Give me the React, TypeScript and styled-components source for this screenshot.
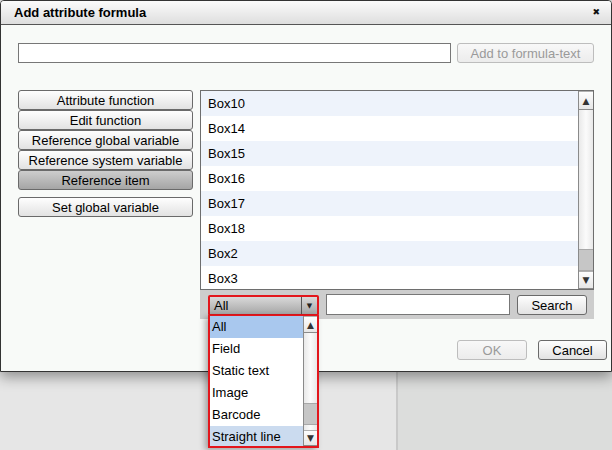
import React from "react";
import styled, { createGlobalStyle } from "styled-components";

const GlobalStyle = createGlobalStyle`
  html, body {
    margin: 0;
    padding: 0;
  }
  body {
    font-family: "Liberation Sans", Arial, sans-serif;
    font-size: 13px;
    color: #000;
  }
`;

const Page = styled.div`
  position: relative;
  width: 612px;
  height: 450px;
  overflow: hidden;
  display: grid;
  grid-template-columns: 396px 1fr;
`;

const Pane = styled.div<{ $tone: string; $edge?: boolean }>`
  background: ${(p) => p.$tone};
  border-left: ${(p) => (p.$edge ? "2px solid #c9c9c9" : "none")};
`;

const Dialog = styled.section`
  position: absolute;
  top: 0;
  left: 0;
  width: 610px;
  height: 370px;
  border: 1px solid #333;
  border-radius: 4px 4px 0 0;
  background: #f8faf8;
  box-shadow: 0 5px 14px rgba(0, 0, 0, 0.38);
  display: flex;
  flex-direction: column;
`;

const TitleBar = styled.header`
  height: 23px;
  flex: none;
  display: flex;
  align-items: center;
  justify-content: space-between;
  padding: 0 11px 0 13px;
  border-bottom: 1px solid #555;
  border-radius: 3px 3px 0 0;
  background: linear-gradient(#fbfbfb, #dedede);
  font-weight: bold;
  font-size: 13px;
`;

const Close = styled.span`
  font-family: "DejaVu Sans", sans-serif;
  font-size: 9px;
  line-height: 1;
  color: #111;
`;

const Body = styled.div`
  flex: 1;
  display: flex;
  flex-direction: column;
  padding: 17px 4px 0 17px;
`;

const FormulaRow = styled.div`
  display: flex;
  align-items: center;
  gap: 6px;
  height: 22px;
`;

const TextField = styled.div<{ $w: number; $h?: number }>`
  width: ${(p) => p.$w}px;
  height: ${(p) => p.$h || 20}px;
  box-sizing: border-box;
  border: 1px solid #777;
  background: #fff;
`;

const Button = styled.button<{ $w?: number; $disabled?: boolean; $pressed?: boolean }>`
  width: ${(p) => (p.$w ? `${p.$w}px` : "100%")};
  height: 20px;
  box-sizing: border-box;
  margin: 0;
  padding: 1px 0 0;
  font-family: "Liberation Sans", Arial, sans-serif;
  font-size: 13px;
  line-height: 17px;
  color: ${(p) => (p.$disabled ? "#9a9a9a" : "#000")};
  border: 1px solid ${(p) => (p.$disabled ? "#bdbdbd" : "#6a6a6a")};
  border-radius: 3px;
  background: ${(p) =>
    p.$pressed
      ? "linear-gradient(#cdcdcd, #a5a5a5)"
      : p.$disabled
      ? "linear-gradient(#f8f8f8, #ececec)"
      : "linear-gradient(#fefefe, #e2e2e2)"};
`;

const MainRow = styled.div`
  display: flex;
  gap: 7px;
  margin-top: 26px;
  padding-right: 13px;
`;

const SideColumn = styled.div`
  width: 175px;
  flex: none;
  display: flex;
  flex-direction: column;
`;

const SideGap = styled.div`
  height: 7px;
`;

const ListColumn = styled.div`
  flex: 1;
  display: flex;
  flex-direction: column;
`;

const ListBox = styled.div`
  height: 198px;
  border: 1px solid #6e6e6e;
  background: #fff;
  display: flex;
  overflow: hidden;
`;

const Rows = styled.div`
  flex: 1;
  overflow: hidden;
`;

const Row = styled.div<{ $alt: boolean }>`
  height: 25px;
  line-height: 25px;
  padding-left: 7px;
  background: ${(p) => (p.$alt ? "#eef3fb" : "#fff")};
`;

const ScrollBar = styled.div<{ $w: number }>`
  width: ${(p) => p.$w}px;
  flex: none;
  display: flex;
  flex-direction: column;
  border-left: 1px solid #8a8a8a;
  background: linear-gradient(90deg, #e9e9e9, #fbfbfb 50%, #e9e9e9);
`;

const Arrow = styled.div<{ $h: number }>`
  height: ${(p) => p.$h}px;
  flex: none;
  display: flex;
  align-items: center;
  justify-content: center;
  font-family: "DejaVu Sans", sans-serif;
  font-size: 9px;
  color: #333;
  background: linear-gradient(#fdfdfd, #e6e6e6);
  border-top: 1px solid #b0b0b0;
  border-bottom: 1px solid #8a8a8a;
`;

const Track = styled.div<{ $end?: number }>`
  flex: 1;
  display: flex;
  flex-direction: column;
  justify-content: flex-end;
  padding-bottom: ${(p) => p.$end || 0}px;
`;

const Thumb = styled.div<{ $h: number }>`
  height: ${(p) => p.$h}px;
  flex: none;
  background: #c6c6c6;
  border-top: 1px solid #a8a8a8;
  border-bottom: 1px solid #a8a8a8;
`;

const FilterBar = styled.div`
  height: 24px;
  display: flex;
  align-items: flex-start;
  gap: 7px;
  padding: 5px 0 0 8px;
  background: #cdcdcd;
`;

const SelectWrap = styled.div`
  position: relative;
  width: 107px;
  height: 17px;
  border: 2px solid #e3161c;
  border-radius: 2px;
  display: flex;
  background: linear-gradient(#d9d9d9, #a6a6a6);
`;

const SelectValue = styled.div`
  flex: 1;
  padding-left: 4px;
  line-height: 18px;
`;

const SelectButton = styled.div`
  width: 15px;
  border-left: 1px solid #555;
  display: flex;
  align-items: center;
  justify-content: center;
  font-family: "DejaVu Sans", sans-serif;
  font-size: 7px;
  color: #222;
`;

const Dropdown = styled.div`
  position: absolute;
  top: 18px;
  left: -2px;
  width: 107px;
  height: 130px;
  border: 2px solid #e3161c;
  border-top: 1px solid #e3161c;
  background: #fff;
  display: flex;
  box-shadow: -3px 2px 6px rgba(0, 0, 0, 0.3);
  z-index: 2;
`;

const Option = styled.div<{ $tone?: string }>`
  height: 22px;
  line-height: 22px;
  padding-left: 2px;
  background: ${(p) => p.$tone || "#fff"};
  white-space: nowrap;
`;

const SearchField = styled(TextField)`
  margin-top: -1px;
`;

const Footer = styled.div`
  display: flex;
  justify-content: flex-end;
  gap: 11px;
  margin-top: 21px;
`;

const items = ["Box10", "Box14", "Box15", "Box16", "Box17", "Box18", "Box2", "Box3"];
const options = ["All", "Field", "Static text", "Image", "Barcode", "Straight line"];

export default function App() {
  return (
    <Page>
      <GlobalStyle />
      <Pane $tone="#e6e6e6" />
      <Pane $tone="#dcdddc" $edge />
      <Dialog>
        <TitleBar>
          <span>Add attribute formula</span>
          <Close>✖</Close>
        </TitleBar>
        <Body>
          <FormulaRow>
            <TextField $w={433} />
            <Button $w={137} $disabled>
              Add to formula-text
            </Button>
          </FormulaRow>
          <MainRow>
            <SideColumn>
              <Button>Attribute function</Button>
              <Button>Edit function</Button>
              <Button>Reference global variable</Button>
              <Button>Reference system variable</Button>
              <Button $pressed>Reference item</Button>
              <SideGap />
              <Button>Set global variable</Button>
            </SideColumn>
            <ListColumn>
              <ListBox>
                <Rows>
                  {items.map((name, i) => (
                    <Row key={name} $alt={i % 2 === 0}>
                      {name}
                    </Row>
                  ))}
                </Rows>
                <ScrollBar $w={14}>
                  <Arrow $h={17}>▲</Arrow>
                  <Track>
                    <Thumb $h={20} />
                  </Track>
                  <Arrow $h={16}>▼</Arrow>
                </ScrollBar>
              </ListBox>
              <FilterBar>
                <SelectWrap>
                  <SelectValue>All</SelectValue>
                  <SelectButton>▼</SelectButton>
                  <Dropdown>
                    <Rows>
                      {options.map((o, i) => (
                        <Option
                          key={o}
                          $tone={i === 0 ? "#a9c8ee" : i === 5 ? "#cbdbef" : undefined}
                        >
                          {o}
                        </Option>
                      ))}
                    </Rows>
                    <ScrollBar $w={13}>
                      <Arrow $h={15}>▲</Arrow>
                      <Track $end={5}>
                        <Thumb $h={20} />
                      </Track>
                      <Arrow $h={14}>▼</Arrow>
                    </ScrollBar>
                  </Dropdown>
                </SelectWrap>
                <SearchField $w={184} $h={21} />
                <Button $w={70}>Search</Button>
              </FilterBar>
            </ListColumn>
          </MainRow>
          <Footer>
            <Button $w={70} $disabled>
              OK
            </Button>
            <Button $w={69}>Cancel</Button>
          </Footer>
        </Body>
      </Dialog>
    </Page>
  );
}
